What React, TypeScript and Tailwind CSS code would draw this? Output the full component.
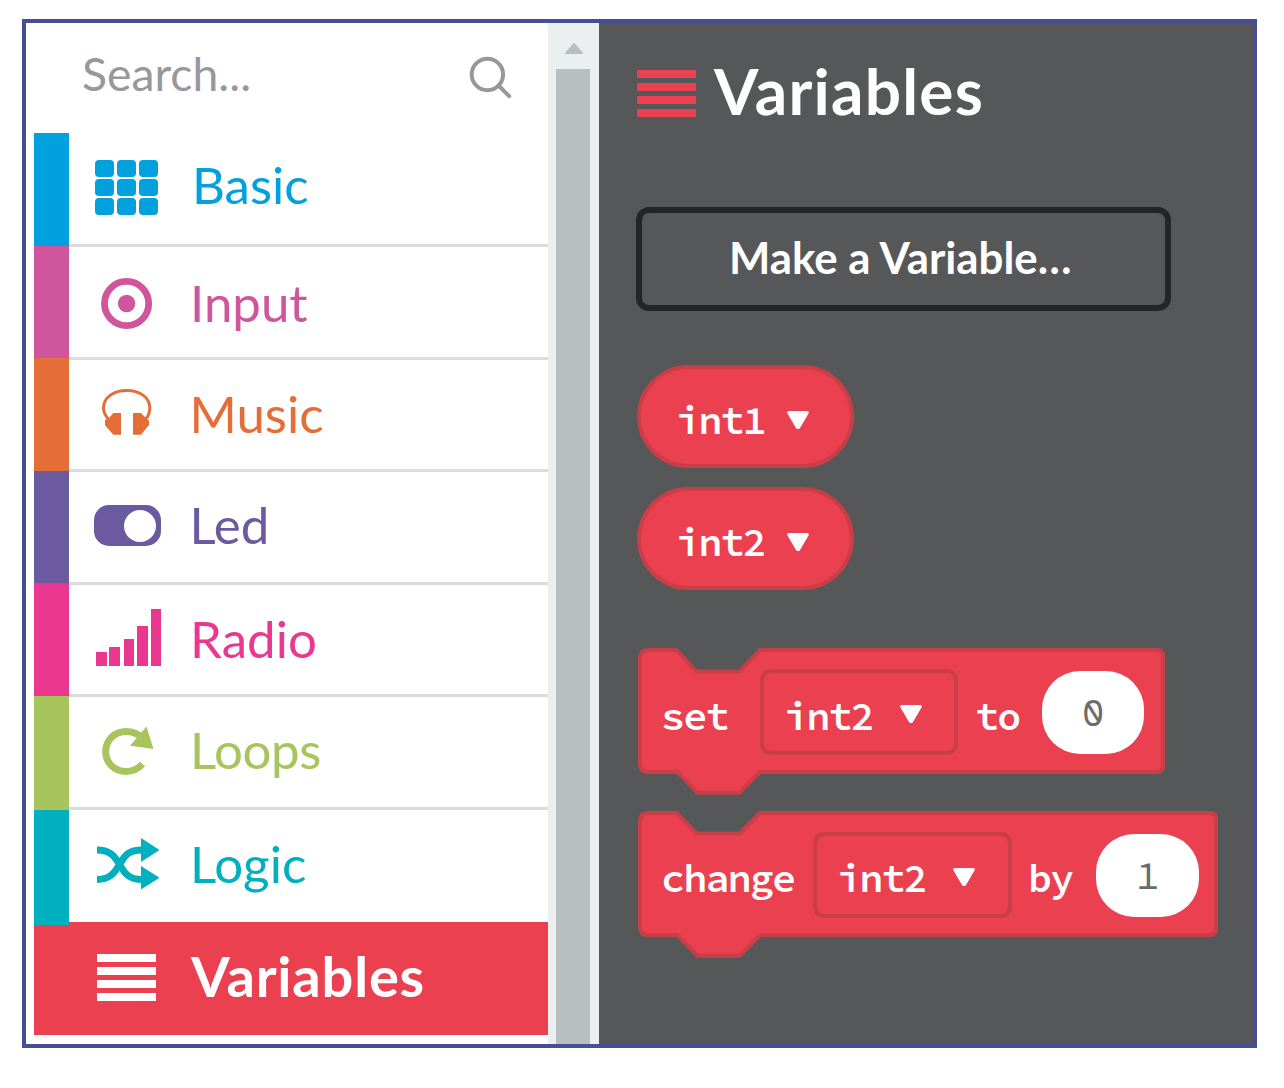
import React from 'react';

const LATO = "font-['Lato',sans-serif]";
const CODE = "font-['Source_Code_Pro','Noto_Sans_Mono','DejaVu_Sans_Mono',monospace]";

type Category = {
  name: string;
  color: string;
  strip: string;
  row: string;
  label: string;
  viewBox: string;
  height: number;
  icon: React.ReactNode;
};

const gridCells = [95, 117, 139].flatMap((x) =>
  [
    [160, 17],
    [179, 17],
    [198, 17],
  ].map(([y, h]) => ({ x, y, h }))
);

const radioBars = [
  [96, 652, 11],
  [109, 647, 11],
  [124, 639, 10],
  [137, 626, 11],
  [151, 609, 10],
];

const categories: Category[] = [
  {
    name: 'Basic',
    color: 'text-[#00a1de]',
    strip: 'h-[113px] bg-[#00a1de]',
    row: 'h-[114px]',
    label: 'mt-[26px] ml-[27px]',
    viewBox: '89 133 76 111',
    height: 111,
    icon: gridCells.map((c) => <rect key={`${c.x}-${c.y}`} x={c.x} y={c.y} width="19" height={c.h} rx="4" />),
  },
  {
    name: 'Input',
    color: 'text-[#cf559d]',
    strip: 'h-[112px] bg-[#cf559d]',
    row: 'h-[113px]',
    label: 'mt-[30px] ml-[25px]',
    viewBox: '89 247 76 110',
    height: 110,
    icon: (
      <>
        <circle cx="126.6" cy="303.5" r="22.1" fill="none" stroke="currentColor" strokeWidth="6.8" />
        <circle cx="126.6" cy="303.5" r="8.7" />
      </>
    ),
  },
  {
    name: 'Music',
    color: 'text-[#e56d38]',
    strip: 'h-[113px] bg-[#e56d38]',
    row: 'h-[112px]',
    label: 'mt-[28px] ml-[24.5px]',
    viewBox: '89 360 76 109',
    height: 109,
    icon: (
      <>
        <path
          d="M108.5 419C105.5 416 103.5 412.5 103.5 408C103.5 397 114 390.5 126.7 390.5C139.4 390.5 149.8 397 149.8 408C149.8 412.5 148.5 416 145.5 419"
          fill="none"
          stroke="currentColor"
          strokeWidth="3"
        />
        <path d="M109.3 417.7L113.3 413H121V434.7H113.3L105 425.3V420ZM133 413H141L145.5 417.7L149 420.5V425L141 434.7H133Z" />
      </>
    ),
  },
  {
    name: 'Led',
    color: 'text-[#6b5aa0]',
    strip: 'h-[112px] bg-[#6b5aa0]',
    row: 'h-[113px]',
    label: 'mt-[27px] ml-[24.5px]',
    viewBox: '89 472 76 110',
    height: 110,
    icon: (
      <>
        <rect x="94" y="505" width="67" height="41" rx="15" />
        <circle cx="140" cy="526" r="16" fill="white" />
      </>
    ),
  },
  {
    name: 'Radio',
    color: 'text-[#ea3891]',
    strip: 'h-[113px] bg-[#ea3891]',
    row: 'h-[112px]',
    label: 'mt-[28px] ml-[25px] tracking-[0.1px]',
    viewBox: '89 585 76 109',
    height: 109,
    icon: radioBars.map(([x, y, w]) => <rect key={x} x={x} y={y} width={w} height={666 - y} />),
  },
  {
    name: 'Loops',
    color: 'text-[#a8c55d]',
    strip: 'h-[114px] bg-[#a8c55d]',
    row: 'h-[113px]',
    label: 'mt-[27px] ml-[25px] tracking-[-0.4px]',
    viewBox: '89 697 76 110',
    height: 110,
    icon: (
      <>
        <path
          d="M141.5 737.5C137.5 733.5 132 731.5 126 731.5C114.5 731.5 105.7 740 105.7 751.5C105.7 763 114.5 771.5 126 771.5C132.5 771.5 138 769 142.5 764"
          fill="none"
          stroke="currentColor"
          strokeWidth="7"
        />
        <path d="M146.5 726.5L153.5 749L130 745.7Z" />
      </>
    ),
  },
  {
    name: 'Logic',
    color: 'text-[#00b0bf]',
    strip: 'h-[115px] bg-[#00b0bf]',
    row: 'h-[112px]',
    label: 'mt-[28px] ml-[25px]',
    viewBox: '89 810 76 109',
    height: 109,
    icon: (
      <>
        <path
          d="M97 850C109 850 114 855 119.5 864.5C125 874 129 879.5 142 879.5M97 879.5C109 879.5 114 874 119.5 864.5C125 855 129 850 142 850"
          fill="none"
          stroke="currentColor"
          strokeWidth="7"
        />
        <path d="M141 838L159.5 850L141 862ZM141 866L159.5 877.7L141 889.5Z" />
      </>
    ),
  },
];

function Bars({ className }: { className: string }) {
  return (
    <div className={`flex w-[59px] shrink-0 flex-col gap-[5px] ${className}`}>
      {[0, 1, 2, 3].map((i) => (
        <div key={i} className="h-2 bg-current" />
      ))}
    </div>
  );
}

function Caret({ className }: { className: string }) {
  return (
    <svg className={`h-[18px] w-[22px] shrink-0 ${className}`} viewBox="0 0 22 18" fill="white">
      <path d="M1.5 0H20.5Q22.5 0.3 21.5 2.5L13 17Q11 19.2 9 17L0.5 2.5Q-0.5 0.3 1.5 0Z" />
    </svg>
  );
}

function Code({ children, className }: { children: React.ReactNode; className: string }) {
  return (
    <span className={`${CODE} block shrink-0 text-[40px] leading-none font-semibold tracking-[-1.8px] whitespace-nowrap ${className}`}>
      {children}
    </span>
  );
}

function Pill({ name, className }: { name: string; className: string }) {
  return (
    <div className={`ml-[38px] flex h-[103px] w-[217px] shrink-0 rounded-full border-4 border-[#c83f48] bg-[#eb404f] ${className}`}>
      <Code className="mt-[31px] ml-[35px] w-[111px]">{name}</Code>
      <Caret className="mt-[42px]" />
    </div>
  );
}

function Dropdown({ className, caret }: { className: string; caret: string }) {
  return (
    <div className={`mt-[21px] flex h-[86px] shrink-0 rounded-[11px] border-4 border-[#c83f48] ${className}`}>
      <Code className="w-[115px]">int2</Code>
      <Caret className={caret} />
    </div>
  );
}

function BlockShape({ width, notch }: { width: number; notch: number }) {
  const r = width - 2;
  return (
    <svg className="absolute inset-0" width={width} height="149" viewBox={`0 0 ${width} 149`}>
      <path
        d={`M11 2H39.5L59.5 ${notch}H102.5L123 2H${r - 6}Q${r} 2 ${r} 8V118Q${r} 124 ${r - 6} 124H123L102.500 144.700H60.500L40.500 124H11Q3 124 3 116V10Q3 2 11 2Z`}
        fill="#eb404f"
        stroke="#c83f48"
        strokeWidth="4"
      />
    </svg>
  );
}

function Value({ children, className }: { children: React.ReactNode; className: string }) {
  return (
    <div className={`mt-[23px] flex h-[83px] shrink-0 justify-center rounded-[38px] bg-white text-[#696d6f] ${className}`}>
      {children}
    </div>
  );
}

export default function App() {
  return (
    <div className={`${LATO} h-[1088px] w-[1284px] overflow-hidden bg-white pt-[19px] pl-[22px]`}>
      <div className="flex h-[1029px] w-[1235px] border-4 border-[#464f93]">
        <aside className="w-[522px] shrink-0 pl-2">
          <div className="flex h-[110px] text-[#97989b]">
            <span className="mt-[27px] ml-[48px] block w-[383px] text-[46.3px] leading-none whitespace-nowrap">Search...</span>
            <svg className="mt-[30px] h-[50px] w-[50px]" viewBox="465 53 50 50" fill="none" stroke="currentColor" strokeWidth="4">
              <circle cx="487.4" cy="74.5" r="15.7" />
              <path d="M498.5 85.5L509.2 96.2" strokeLinecap="round" />
            </svg>
          </div>
          <nav>
            <div className="flex">
              <div className="relative z-10 -mb-[3px] w-[35px] shrink-0">
                {categories.map((c) => (
                  <div key={c.name} className={c.strip} />
                ))}
              </div>
              <ul className="w-[479px]">
                {categories.map((c, i) => (
                  <li
                    key={c.name}
                    className={`flex items-start ${i < 6 ? 'border-b-3 border-[#dbdcdd]' : ''} ${c.row} ${c.color}`}
                  >
                    <svg className="ml-5 shrink-0" width="76" height={c.height} viewBox={c.viewBox} fill="currentColor">
                      {c.icon}
                    </svg>
                    <span className={`block text-[51px] leading-none whitespace-nowrap ${c.label}`}>{c.name}</span>
                  </li>
                ))}
              </ul>
            </div>
            <div className="flex h-[113px] w-[514px] bg-[#eb404f] text-white">
              <Bars className="mt-8 ml-[63px]" />
              <span className="mt-[26px] ml-[35px] block text-[56px] leading-none font-bold tracking-[0.8px] whitespace-nowrap">Variables</span>
            </div>
          </nav>
        </aside>

        <div className="flex w-[51px] shrink-0 flex-col bg-[#ebeff0] pr-[9px] pl-2">
          <svg className="mt-5 ml-[9px] h-[11px] w-[18px] shrink-0" viewBox="0 0 18 11" fill="#b9bec1">
            <path d="M0 11V10L8.5 0H9.5L18 10V11Z" />
          </svg>
          <div className="mt-[15px] flex-1 bg-[#b9bec1]" />
        </div>

        <main className="flex w-[654px] flex-col bg-[#565759] text-white">
          <header className="flex h-[184px] shrink-0">
            <Bars className="mt-[47px] ml-[38px] text-[#eb404f]" />
            <h1 className="mt-[36px] ml-[18px] text-[64px] leading-none font-bold tracking-[1.2px] whitespace-nowrap">Variables</h1>
          </header>
          <button className="ml-[37px] flex h-[104px] w-[535px] shrink-0 rounded-[13px] border-[6px] border-[#252525]">
            <span className="mt-[23px] ml-[87px] block text-[43.8px] leading-none font-bold whitespace-nowrap">Make a Variable…</span>
          </button>

          <Pill name="int1" className="mt-[54px]" />
          <Pill name="int2" className="mt-[19px]" />

          <div className="relative mt-[58px] ml-[38px] flex h-[149px] w-[528px] shrink-0 items-start">
            <BlockShape width={528} notch={23.5} />
            <div className="relative flex items-start">
              <Code className="mt-[48px] ml-6 w-[99px]">set</Code>
              <Dropdown className="w-[198px] pt-[23px] pl-[20px]" caret="ml-px mt-[9px]" />
              <Code className="mt-[48px] ml-[17px] w-[67px]">to</Code>
              <Value className="w-[102px]">
                <span className="mt-[22px] block h-[37px] -scale-x-100 font-['Noto_Sans_Mono',monospace] text-[37px] leading-none">0</span>
              </Value>
            </div>
          </div>

          <div className="relative mt-[14px] ml-[38px] flex h-[149px] w-[581px] shrink-0 items-start">
            <BlockShape width={581} notch={22.5} />
            <div className="relative flex items-start">
              <Code className="mt-[47px] ml-6 w-[152px]">change</Code>
              <Dropdown className="w-[199px] pt-[22px] pl-[20px]" caret="ml-px mt-[10px]" />
              <Code className="mt-[47px] ml-4 w-[68px]">by</Code>
              <Value className="w-[103px]">
                <span className={`${CODE} mt-[21px] block text-[40px] leading-none`}>1</span>
              </Value>
            </div>
          </div>
        </main>
      </div>
    </div>
  );
}
